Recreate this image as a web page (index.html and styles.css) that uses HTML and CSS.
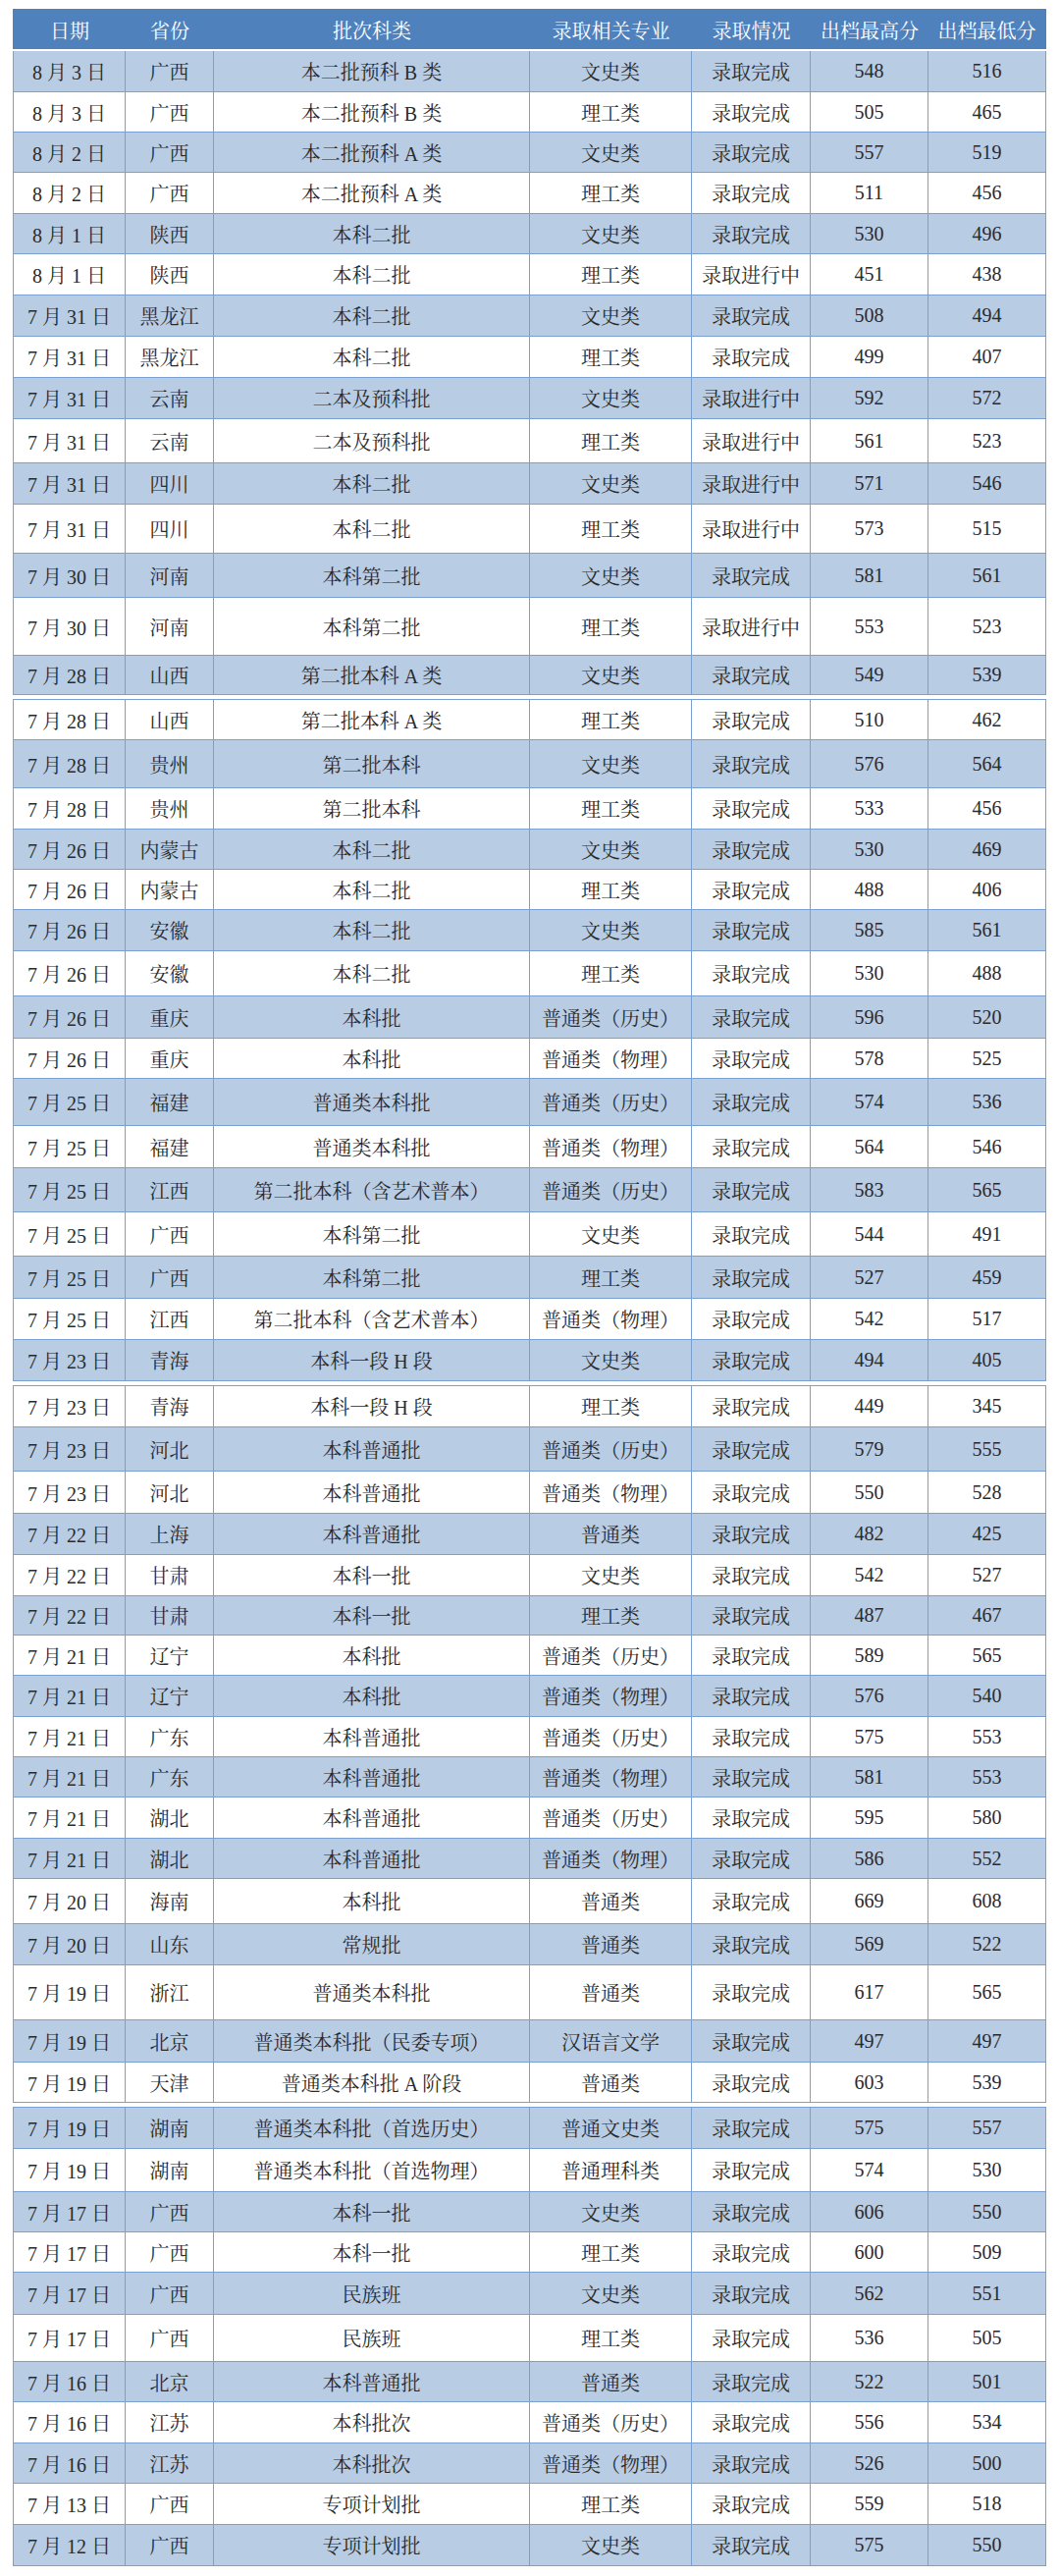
FILE: index.html
```html
<!DOCTYPE html>
<html lang="zh-CN">
<head>
<meta charset="utf-8">
<title>录取情况</title>
<link rel="stylesheet" href="styles.css">
</head>
<body>
<div class="sheet">
  <div class="seg">
    <div class="row head"><span>日期</span><span>省份</span><span>批次科类</span><span>录取相关专业</span><span>录取情况</span><span>出档最高分</span><span>出档最低分</span></div>
    <div class="row b h41 first"><span>8 月 3 日</span><span>广西</span><span>本二批预科 B 类</span><span>文史类</span><span>录取完成</span><span>548</span><span>516</span></div>
    <div class="row h41"><span>8 月 3 日</span><span>广西</span><span>本二批预科 B 类</span><span>理工类</span><span>录取完成</span><span>505</span><span>465</span></div>
    <div class="row b h41"><span>8 月 2 日</span><span>广西</span><span>本二批预科 A 类</span><span>文史类</span><span>录取完成</span><span>557</span><span>519</span></div>
    <div class="row h42"><span>8 月 2 日</span><span>广西</span><span>本二批预科 A 类</span><span>理工类</span><span>录取完成</span><span>511</span><span>456</span></div>
    <div class="row b h41"><span>8 月 1 日</span><span>陕西</span><span>本科二批</span><span>文史类</span><span>录取完成</span><span>530</span><span>496</span></div>
    <div class="row h42"><span>8 月 1 日</span><span>陕西</span><span>本科二批</span><span>理工类</span><span>录取进行中</span><span>451</span><span>438</span></div>
    <div class="row b h42"><span>7 月 31 日</span><span>黑龙江</span><span>本科二批</span><span>文史类</span><span>录取完成</span><span>508</span><span>494</span></div>
    <div class="row h42"><span>7 月 31 日</span><span>黑龙江</span><span>本科二批</span><span>理工类</span><span>录取完成</span><span>499</span><span>407</span></div>
    <div class="row b h42"><span>7 月 31 日</span><span>云南</span><span>二本及预科批</span><span>文史类</span><span>录取进行中</span><span>592</span><span>572</span></div>
    <div class="row h45"><span>7 月 31 日</span><span>云南</span><span>二本及预科批</span><span>理工类</span><span>录取进行中</span><span>561</span><span>523</span></div>
    <div class="row b h42"><span>7 月 31 日</span><span>四川</span><span>本科二批</span><span>文史类</span><span>录取进行中</span><span>571</span><span>546</span></div>
    <div class="row h50"><span>7 月 31 日</span><span>四川</span><span>本科二批</span><span>理工类</span><span>录取进行中</span><span>573</span><span>515</span></div>
    <div class="row b h45"><span>7 月 30 日</span><span>河南</span><span>本科第二批</span><span>文史类</span><span>录取完成</span><span>581</span><span>561</span></div>
    <div class="row h59"><span>7 月 30 日</span><span>河南</span><span>本科第二批</span><span>理工类</span><span>录取进行中</span><span>553</span><span>523</span></div>
    <div class="row b h40"><span>7 月 28 日</span><span>山西</span><span>第二批本科 A 类</span><span>文史类</span><span>录取完成</span><span>549</span><span>539</span></div>
  </div>
  <div class="seg">
    <div class="row h41"><span>7 月 28 日</span><span>山西</span><span>第二批本科 A 类</span><span>理工类</span><span>录取完成</span><span>510</span><span>462</span></div>
    <div class="row b h49"><span>7 月 28 日</span><span>贵州</span><span>第二批本科</span><span>文史类</span><span>录取完成</span><span>576</span><span>564</span></div>
    <div class="row h42"><span>7 月 28 日</span><span>贵州</span><span>第二批本科</span><span>理工类</span><span>录取完成</span><span>533</span><span>456</span></div>
    <div class="row b h41"><span>7 月 26 日</span><span>内蒙古</span><span>本科二批</span><span>文史类</span><span>录取完成</span><span>530</span><span>469</span></div>
    <div class="row h41"><span>7 月 26 日</span><span>内蒙古</span><span>本科二批</span><span>理工类</span><span>录取完成</span><span>488</span><span>406</span></div>
    <div class="row b h42"><span>7 月 26 日</span><span>安徽</span><span>本科二批</span><span>文史类</span><span>录取完成</span><span>585</span><span>561</span></div>
    <div class="row h46"><span>7 月 26 日</span><span>安徽</span><span>本科二批</span><span>理工类</span><span>录取完成</span><span>530</span><span>488</span></div>
    <div class="row b h43"><span>7 月 26 日</span><span>重庆</span><span>本科批</span><span>普通类（历史）</span><span>录取完成</span><span>596</span><span>520</span></div>
    <div class="row h41"><span>7 月 26 日</span><span>重庆</span><span>本科批</span><span>普通类（物理）</span><span>录取完成</span><span>578</span><span>525</span></div>
    <div class="row b h48"><span>7 月 25 日</span><span>福建</span><span>普通类本科批</span><span>普通类（历史）</span><span>录取完成</span><span>574</span><span>536</span></div>
    <div class="row h43"><span>7 月 25 日</span><span>福建</span><span>普通类本科批</span><span>普通类（物理）</span><span>录取完成</span><span>564</span><span>546</span></div>
    <div class="row b h45"><span>7 月 25 日</span><span>江西</span><span>第二批本科（含艺术普本）</span><span>普通类（历史）</span><span>录取完成</span><span>583</span><span>565</span></div>
    <div class="row h45"><span>7 月 25 日</span><span>广西</span><span>本科第二批</span><span>文史类</span><span>录取完成</span><span>544</span><span>491</span></div>
    <div class="row b h43"><span>7 月 25 日</span><span>广西</span><span>本科第二批</span><span>理工类</span><span>录取完成</span><span>527</span><span>459</span></div>
    <div class="row h42"><span>7 月 25 日</span><span>江西</span><span>第二批本科（含艺术普本）</span><span>普通类（物理）</span><span>录取完成</span><span>542</span><span>517</span></div>
    <div class="row b h42"><span>7 月 23 日</span><span>青海</span><span>本科一段 H 段</span><span>文史类</span><span>录取完成</span><span>494</span><span>405</span></div>
  </div>
  <div class="seg">
    <div class="row h42"><span>7 月 23 日</span><span>青海</span><span>本科一段 H 段</span><span>理工类</span><span>录取完成</span><span>449</span><span>345</span></div>
    <div class="row b h45"><span>7 月 23 日</span><span>河北</span><span>本科普通批</span><span>普通类（历史）</span><span>录取完成</span><span>579</span><span>555</span></div>
    <div class="row h43"><span>7 月 23 日</span><span>河北</span><span>本科普通批</span><span>普通类（物理）</span><span>录取完成</span><span>550</span><span>528</span></div>
    <div class="row b h42"><span>7 月 22 日</span><span>上海</span><span>本科普通批</span><span>普通类</span><span>录取完成</span><span>482</span><span>425</span></div>
    <div class="row h42"><span>7 月 22 日</span><span>甘肃</span><span>本科一批</span><span>文史类</span><span>录取完成</span><span>542</span><span>527</span></div>
    <div class="row b h40"><span>7 月 22 日</span><span>甘肃</span><span>本科一批</span><span>理工类</span><span>录取完成</span><span>487</span><span>467</span></div>
    <div class="row h41"><span>7 月 21 日</span><span>辽宁</span><span>本科批</span><span>普通类（历史）</span><span>录取完成</span><span>589</span><span>565</span></div>
    <div class="row b h42"><span>7 月 21 日</span><span>辽宁</span><span>本科批</span><span>普通类（物理）</span><span>录取完成</span><span>576</span><span>540</span></div>
    <div class="row h41"><span>7 月 21 日</span><span>广东</span><span>本科普通批</span><span>普通类（历史）</span><span>录取完成</span><span>575</span><span>553</span></div>
    <div class="row b h41"><span>7 月 21 日</span><span>广东</span><span>本科普通批</span><span>普通类（物理）</span><span>录取完成</span><span>581</span><span>553</span></div>
    <div class="row h42"><span>7 月 21 日</span><span>湖北</span><span>本科普通批</span><span>普通类（历史）</span><span>录取完成</span><span>595</span><span>580</span></div>
    <div class="row b h41"><span>7 月 21 日</span><span>湖北</span><span>本科普通批</span><span>普通类（物理）</span><span>录取完成</span><span>586</span><span>552</span></div>
    <div class="row h46"><span>7 月 20 日</span><span>海南</span><span>本科批</span><span>普通类</span><span>录取完成</span><span>669</span><span>608</span></div>
    <div class="row b h42"><span>7 月 20 日</span><span>山东</span><span>常规批</span><span>普通类</span><span>录取完成</span><span>569</span><span>522</span></div>
    <div class="row h56"><span>7 月 19 日</span><span>浙江</span><span>普通类本科批</span><span>普通类</span><span>录取完成</span><span>617</span><span>565</span></div>
    <div class="row b h43"><span>7 月 19 日</span><span>北京</span><span>普通类本科批（民委专项）</span><span>汉语言文学</span><span>录取完成</span><span>497</span><span>497</span></div>
    <div class="row h41"><span>7 月 19 日</span><span>天津</span><span>普通类本科批 A 阶段</span><span>普通类</span><span>录取完成</span><span>603</span><span>539</span></div>
  </div>
  <div class="seg">
    <div class="row b h42"><span>7 月 19 日</span><span>湖南</span><span>普通类本科批（首选历史）</span><span>普通文史类</span><span>录取完成</span><span>575</span><span>557</span></div>
    <div class="row h44"><span>7 月 19 日</span><span>湖南</span><span>普通类本科批（首选物理）</span><span>普通理科类</span><span>录取完成</span><span>574</span><span>530</span></div>
    <div class="row b h41"><span>7 月 17 日</span><span>广西</span><span>本科一批</span><span>文史类</span><span>录取完成</span><span>606</span><span>550</span></div>
    <div class="row h41"><span>7 月 17 日</span><span>广西</span><span>本科一批</span><span>理工类</span><span>录取完成</span><span>600</span><span>509</span></div>
    <div class="row b h43"><span>7 月 17 日</span><span>广西</span><span>民族班</span><span>文史类</span><span>录取完成</span><span>562</span><span>551</span></div>
    <div class="row h48"><span>7 月 17 日</span><span>广西</span><span>民族班</span><span>理工类</span><span>录取完成</span><span>536</span><span>505</span></div>
    <div class="row b h41"><span>7 月 16 日</span><span>北京</span><span>本科普通批</span><span>普通类</span><span>录取完成</span><span>522</span><span>501</span></div>
    <div class="row h42"><span>7 月 16 日</span><span>江苏</span><span>本科批次</span><span>普通类（历史）</span><span>录取完成</span><span>556</span><span>534</span></div>
    <div class="row b h41"><span>7 月 16 日</span><span>江苏</span><span>本科批次</span><span>普通类（物理）</span><span>录取完成</span><span>526</span><span>500</span></div>
    <div class="row h42"><span>7 月 13 日</span><span>广西</span><span>专项计划批</span><span>理工类</span><span>录取完成</span><span>559</span><span>518</span></div>
    <div class="row b h42"><span>7 月 12 日</span><span>广西</span><span>专项计划批</span><span>文史类</span><span>录取完成</span><span>575</span><span>550</span></div>
  </div>
</div>
</body>
</html>
```

FILE: styles.css
```css
html, body {
  margin: 0;
  padding: 0;
  background: #ffffff;
}

body {
  font-family: "Liberation Serif", "Noto Serif CJK SC", "Noto Sans CJK SC", serif;
  font-size: 20px;
  color: #2a2a2a;
}

.sheet {
  width: 1053px;
  margin: 9px 0 0 13px;
  display: flex;
  flex-direction: column;
  gap: 4px;
}

.seg {
  border: 1px solid #7a9fd1;
  border-top: none;
}

.row {
  display: grid;
  grid-template-columns: 114px 90px 322px 165px 121px 120px 1fr;
  box-sizing: border-box;
  border-top: 1px solid #7a9fd1;
  background: #ffffff;
}

.row > span {
  display: flex;
  align-items: center;
  justify-content: center;
  white-space: nowrap;
  border-right: 1px solid #7a9fd1;
}

.row > span:last-child {
  border-right: none;
}

.row.b {
  background: #b8cce4;
}

.row.head {
  height: 43px;
  background: #4f81bd;
  color: #ffffff;
  border-top: 1px solid #4f81bd;
  border-bottom: 2px solid #ffffff;
  margin: 0 -1px;
  padding: 0 1px;
  grid-template-columns: 114px 90px 322px 165px 121px 120px 1fr;
}

.row.head > span {
  border-right: none;
}

.row.first {
  border-top: none;
  height: 40px;
}

.h40 { height: 40px; }
.h41 { height: 41px; }
.h42 { height: 42px; }
.h43 { height: 43px; }
.h44 { height: 44px; }
.h45 { height: 45px; }
.h46 { height: 46px; }
.h48 { height: 48px; }
.h49 { height: 49px; }
.h50 { height: 50px; }
.h56 { height: 56px; }
.h59 { height: 59px; }

.row.first.h41 { height: 41px; }
```
